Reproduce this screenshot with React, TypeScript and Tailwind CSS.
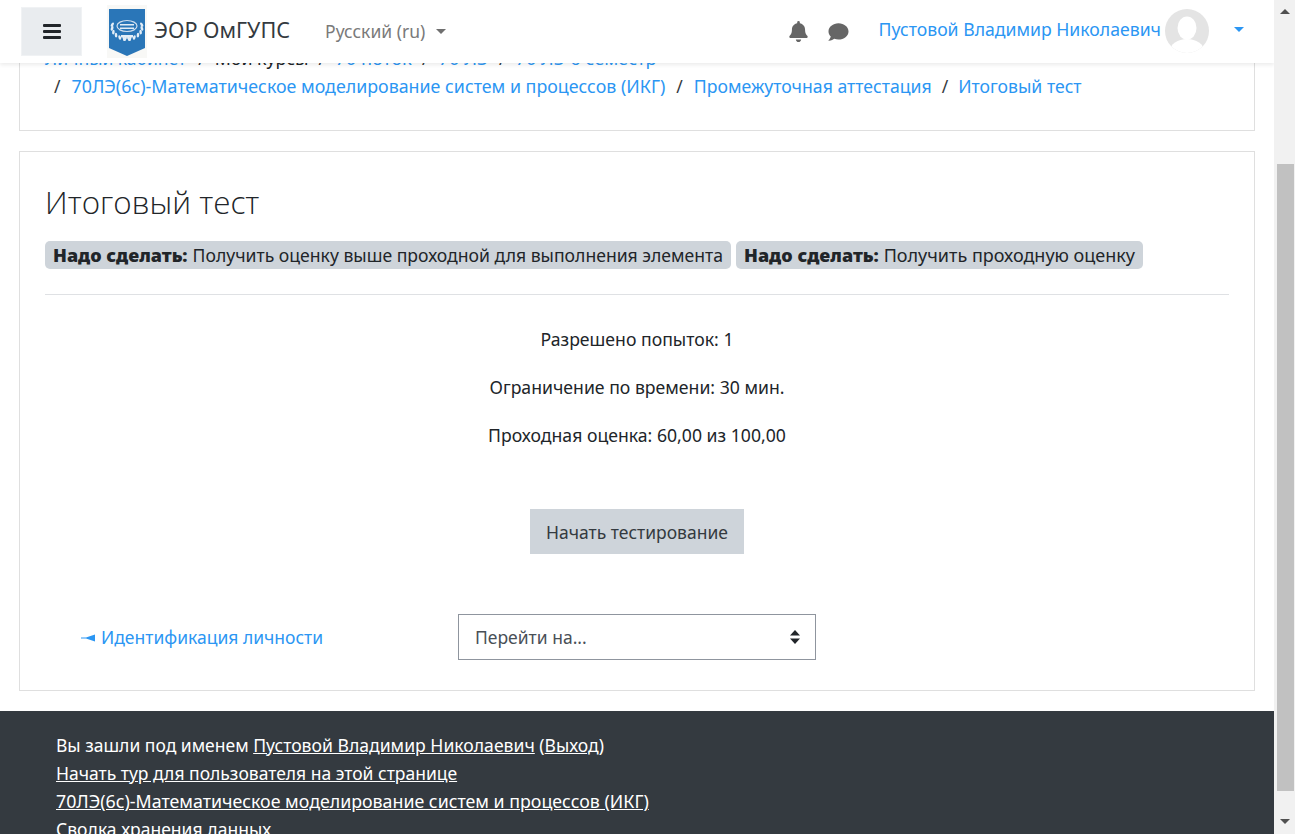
import React from "react";

const font = { fontFamily: '"Noto Sans", "Open Sans", sans-serif' };

function Sep({ className = "" }: { className?: string }) {
  return <span className={"text-[#343a40] " + className}>/</span>;
}

function Logo() {
  const leaves = [0, 1, 2, 3, 4, 5, 6];
  return (
    <svg width="40" height="53" viewBox="0 0 40 53" className="shrink-0">
      <rect width="40" height="53" fill="#f8f8f6" />
      <path d="M2 4H38V43L20 51L2 43Z" fill="#2a76b8" />
      {leaves.map((i) => {
        const a = (i / 6) * 1.9 + 0.1;
        const x = 15 * Math.cos(a - 0.3);
        const y = 12 * Math.sin(a - 0.3);
        return (
          <g key={i} fill="#e3edf6">
            <ellipse cx={20 + x} cy={22 + y} rx="1.3" ry="2.4" transform={`rotate(${-30 + i * 12} ${20 + x} ${22 + y})`} />
            <ellipse cx={20 - x} cy={22 + y} rx="1.3" ry="2.4" transform={`rotate(${30 - i * 12} ${20 - x} ${22 + y})`} />
          </g>
        );
      })}
      <ellipse cx="20" cy="21" rx="10" ry="5.5" fill="none" stroke="#cfdeee" strokeWidth="1.2" />
      <rect x="13" y="19" width="14" height="1.5" fill="#e3edf6" />
      <rect x="13" y="22.5" width="14" height="1.5" fill="#e3edf6" />
      <rect x="14" y="30" width="12" height="2.5" fill="#e3edf6" />
    </svg>
  );
}

function Bell() {
  return (
    <svg width="19" height="21" viewBox="0 0 448 512" fill="#666">
      <path d="M224 512c35 0 64-29 64-64H160c0 35 29 64 64 64zm215-150c-19-21-55-52-55-154 0-78-54-140-128-155V32a32 32 0 1 0-64 0v21C118 68 64 130 64 208c0 102-36 133-55 154-6 6-9 14-9 22 0 16 13 32 32 32h384c19 0 32-16 32-32 0-8-3-16-9-22z" />
    </svg>
  );
}

function Comment() {
  return (
    <svg width="21" height="20" viewBox="0 0 512 512" fill="#666">
      <path d="M256 32C115 32 0 125 0 240c0 50 22 95 58 131-13 51-55 96-56 97-2 2-3 6-2 9s4 3 8 3c66 0 116-32 140-51 33 12 70 19 108 19 141 0 256-93 256-208S397 32 256 32z" />
    </svg>
  );
}

function Avatar() {
  return (
    <svg width="44" height="44" viewBox="0 0 44 44" className="shrink-0">
      <circle cx="22" cy="22" r="22" fill="#e4e4e4" />
      <clipPath id="av"><circle cx="22" cy="22" r="22" /></clipPath>
      <g clipPath="url(#av)" fill="#fff">
        <ellipse cx="22" cy="19" rx="9.5" ry="11.5" />
        <ellipse cx="22" cy="42" rx="17" ry="12" />
      </g>
    </svg>
  );
}

function Caret({ color, className = "" }: { color: string; className?: string }) {
  return (
    <svg width="10" height="5" viewBox="0 0 10 5" className={className}>
      <path d="M0 0H10L5 5Z" fill={color} />
    </svg>
  );
}

function Header() {
  return (
    <header className="absolute left-0 top-0 z-10 flex h-[63px] w-full items-center bg-white pl-[21px] pr-[30px] shadow-[0_2px_4px_rgba(0,0,0,0.08)]">
      <button className="flex h-[49px] w-[61px] items-center justify-center border border-[#f0f2f4] bg-[#e9ecef]">
        <svg width="18" height="15" viewBox="0 0 18 15" fill="#212529">
          <rect width="18" height="3" rx="1" y="0" />
          <rect width="18" height="3" rx="1" y="6" />
          <rect width="18" height="3" rx="1" y="12" />
        </svg>
      </button>
      <div className="ml-[25px] flex items-center">
        <Logo />
      </div>
      <span className="ml-[7px] -mt-[2px] text-[21.6px] text-[#343a40]">ЭОР ОмГУПС</span>
      <span className="ml-[35px] text-[17.5px] text-[#7a7a7a]">Русский (ru)</span>
      <Caret color="#6f6f6f" className="ml-[11px]" />
      <div className="ml-auto flex items-center">
        <Bell />
        <span className="ml-[20px] flex"><Comment /></span>
        <span className="ml-[30px] -mt-[4px] text-[17.65px] text-[#2b96f3]">Пустовой Владимир Николаевич</span>
        <span className="ml-[4px] -mt-[2px] flex"><Avatar /></span>
        <Caret color="#2b96f3" className="ml-[25px] -mt-[5px]" />
      </div>
    </header>
  );
}

function Crumb({ children, className = "" }: { children: React.ReactNode; className?: string }) {
  return <a className={"text-[#2b96f3] " + className}>{children}</a>;
}

function Badge({ text, className = "" }: { text: string; className?: string }) {
  return (
    <span className="flex h-[28px] items-center whitespace-nowrap rounded-[5px] bg-[#ced4da] px-[8px] text-[#212529]">
      <b className="text-[18px] font-black">Надо сделать:</b>
      <span className={"ml-[5px] " + className}>{text}</span>
    </span>
  );
}

export default function App() {
  return (
    <div className="flex h-[834px] w-[1295px] overflow-hidden bg-white text-[17.5px] text-[#212529]" style={font}>
      <div className="relative h-full w-[1274px] overflow-hidden">
        <Header />
        <main className="px-[19px]">
          <section className="h-[131px] border border-t-0 border-[#dfdfdf] pl-[25px] pt-[44px] leading-[28px]">
            <div className="flex gap-[10px] whitespace-nowrap">
              <Crumb>Личный кабинет</Crumb><Sep className="ml-[2px]" />
              <span className="text-[17.8px]">Мои курсы</span><Sep />
              <Crumb className="text-[18.4px]">70 поток</Crumb><Sep />
              <Crumb className="text-[18.4px]">70 ЛЭ</Crumb><Sep />
              <Crumb className="text-[18.2px]">70 ЛЭ  6 семестр</Crumb>
            </div>
            <div className="flex gap-[10px] whitespace-nowrap pl-[9px]">
              <Sep className="mr-[1px]" />
              <Crumb className="text-[17.82px]">70ЛЭ(6с)-Математическое моделирование систем и процессов (ИКГ)</Crumb><Sep className="ml-[1px] mr-[1px]" />
              <Crumb className="text-[17.65px]">Промежуточная аттестация</Crumb><Sep />
              <Crumb className="text-[17.65px]">Итоговый тест</Crumb>
            </div>
          </section>
          <section className="mt-[20px] h-[540px] border border-[#dfdfdf] px-[25px] pt-[25px]">
            <h1 className="text-[31.4px] font-light leading-[50px] text-[#212529] [font-family:'Open_Sans',sans-serif]">Итоговый тест</h1>
            <div className="mt-[14px] flex gap-[5px]">
              <Badge className="text-[17.6px]" text="Получить оценку выше проходной для выполнения элемента" />
              <Badge className="text-[18px]" text="Получить проходную оценку" />
            </div>
            <hr className="mt-[25px] border-[#dfe1e4]" />
            <div className="mt-[30px] flex flex-col items-center gap-[20px] text-[17.65px] leading-[28px]">
              <p>Разрешено попыток: 1</p>
              <p>Ограничение по времени: 30 мин.</p>
              <p>Проходная оценка: 60,00 из 100,00</p>
            </div>
            <div className="mt-[60px] flex justify-center">
              <button className="h-[45px] w-[214px] bg-[#ced4da] pt-[2px] text-[#343a40]">Начать тестирование</button>
            </div>
            <div className="mt-[60px] flex items-center">
              <a className="ml-[36px] flex w-[377px] items-center text-[#2b96f3]">
                <svg width="15" height="8" viewBox="0 0 15 8" className="mr-[5px] mt-[1px]">
                  <path d="M0 3.4H5L14 0.5V7.5L5 4.6H0Z" fill="#2b96f3" />
                </svg>
                Идентификация личности
              </a>
              <div className="flex h-[46px] w-[358px] items-center justify-between border border-[#8f959e] pl-[16px] pr-[15px] text-[#495057]">
                <span>Перейти на...</span>
                <svg width="10" height="14" viewBox="0 0 10 14" fill="#212529">
                  <path d="M5 0L10 5.5H0Z" />
                  <path d="M5 14L0 8.5H10Z" />
                </svg>
              </div>
            </div>
          </section>
        </main>
        <footer className="mt-[20px] h-[200px] bg-[#343a40] pl-[56px] pt-[20px] leading-[28px] text-white">
          <p>
            Вы зашли под именем <a className="text-[17.6px] underline">Пустовой Владимир Николаевич</a> (<a className="underline">Выход</a>)
          </p>
          <p><a className="underline">Начать тур для пользователя на этой странице</a></p>
          <p><a className="text-[17.8px] underline">70ЛЭ(6с)-Математическое моделирование систем и процессов (ИКГ)</a></p>
          <p><a className="underline">Сводка хранения данных</a></p>
        </footer>
      </div>
      <aside className="flex h-full w-[21px] flex-col items-center bg-[#f1f1f1]">
        <svg width="10" height="5" viewBox="0 0 10 5" className="mt-[9px]"><path d="M5 0L10 5H0Z" fill="#505050" /></svg>
        <div className="ml-[1px] mt-[150px] h-[627px] w-[17px] bg-[#c1c1c1]" />
        <svg width="10" height="5" viewBox="0 0 10 5" className="mt-[28px]"><path d="M0 0H10L5 5Z" fill="#505050" /></svg>
      </aside>
    </div>
  );
}
